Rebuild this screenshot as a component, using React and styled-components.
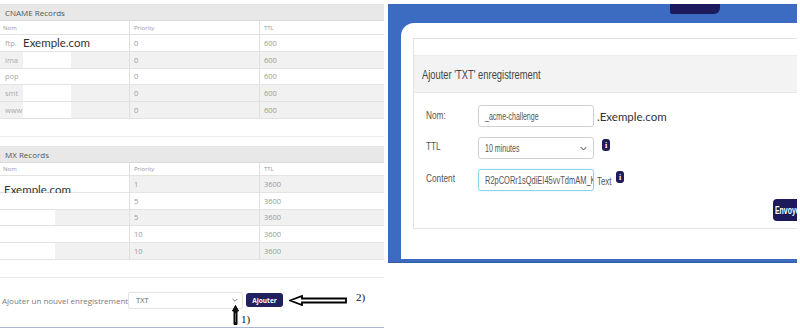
import React from 'react'
import styled, { createGlobalStyle } from 'styled-components'

const GlobalStyle = createGlobalStyle`
  html, body {
    margin: 0;
    padding: 0;
    background: #fff;
  }
  body {
    width: 800px;
    height: 328px;
    overflow: hidden;
    font-family: "Open Sans", "Liberation Sans", sans-serif;
  }
`

// the modal screenshot is horizontally squeezed; its texts are drawn narrow
const Squeeze = styled.span`
  display: inline-block;
  white-space: nowrap;
  font-family: "Liberation Sans", Arial, sans-serif;
  transform: scaleX(${p => p.$s || 0.68});
  transform-origin: left center;
  flex: ${p => (p.$grow ? '1' : 'none')};
  min-width: 0;
`

const Page = styled.div`
  display: flex;
  align-items: flex-start;
  height: 328px;
`

const LeftCol = styled.div`
  width: 384px;
  display: flex;
  flex-direction: column;
  padding-top: 4px;
`

const Table = styled.div`
  border-top: 1px solid #e4e4e4;
  display: flex;
  flex-direction: column;
  margin-top: ${p => p.$top || 0}px;
`

const TableTitle = styled.div`
  height: 16px;
  background: #e8e8e8;
  border-bottom: 1px solid #dadada;
  font-size: 8px;
  color: #555;
  line-height: 16px;
  padding-left: 5px;
  box-sizing: border-box;
`

const Row = styled.div`
  display: grid;
  grid-template-columns: 130px 130px 1fr;
  height: ${p => p.$h || 16.8}px;
  background: ${p => (p.$gray ? '#f1f1f1' : '#fff')};
  border-bottom: 1px solid #e3e3e3;
  box-sizing: border-box;
`

const Cell = styled.div`
  display: flex;
  align-items: center;
  padding-left: ${p => p.$pad ?? 4}px;
  font-size: ${p => (p.$head ? 6 : 7.5)}px;
  color: ${p => (p.$head ? '#999' : '#9a9a9a')};
  border-right: ${p => (p.$last ? 'none' : '1px solid #e0e0e0')};
  overflow: visible;
`

const Prefix = styled.span`
  width: 18px;
  overflow: hidden;
  white-space: nowrap;
  color: #aaa;
`

const Mask = styled.div`
  align-self: stretch;
  width: ${p => p.$w}px;
  background: #fff;
  display: flex;
  align-items: ${p => p.$align || 'center'};
  white-space: nowrap;
  box-sizing: border-box;
`

const Domain = styled.span`
  font-family: Lato, "Open Sans", sans-serif;
  font-size: 11.5px;
  color: #333;
  padding-left: ${p => p.$pl || 0}px;
  margin-bottom: ${p => p.$mb || 0}px;
`

const Divider = styled.div`
  background: ${p => p.$color || '#ececec'};
  margin-top: ${p => p.$mt}px;
  height: ${p => p.$h || 1}px;
`

const AddRow = styled.div`
  display: flex;
  align-items: center;
  height: 17px;
  margin-top: 14px;
  position: relative;
`

const AddLabel = styled.span`
  font-size: 8px;
  color: #7a7a7a;
  padding-left: 2px;
  width: 126px;
  white-space: nowrap;
`

const SmallSelect = styled.div`
  width: 115px;
  height: 17px;
  box-sizing: border-box;
  border: 1px solid #e2e2e2;
  border-radius: 2px;
  display: flex;
  align-items: center;
  justify-content: space-between;
  padding: 0 4px 0 7px;
  font-size: 7.5px;
  color: #666;
`

const Chevron = styled.svg`
  flex-shrink: 0;
`

const SmallButton = styled.button`
  margin-left: 3px;
  height: 14px;
  width: 37px;
  background: #23205f;
  border: none;
  border-radius: 3px;
  color: #fff;
  font-family: "Open Sans", sans-serif;
  font-weight: 700;
  font-size: 6.5px;
  padding: 0;
`

const Note = styled.span`
  font-family: "Liberation Serif", serif;
  font-size: 11px;
  color: #111;
  margin-left: ${p => p.$ml || 0}px;
  margin-top: ${p => p.$mt || 0}px;
`

const UpArrow = styled.div`
  position: absolute;
  left: 232px;
  top: 13px;
  display: flex;
  align-items: flex-end;
`

const Panel = styled.div`
  margin-left: 4px;
  margin-top: 4px;
  width: 409px;
  height: 259px;
  background: #3c6cc1;
  display: flex;
  flex-direction: column;
  padding: 0 0 3px 13px;
  box-sizing: border-box;
  border-bottom: 1px solid #35609f;
`

const TopBar = styled.div`
  height: 19px;
  display: flex;
  padding-left: 269px;
  flex-shrink: 0;
`

const Tab = styled.div`
  width: 50px;
  height: 10px;
  background: #1d1a5b;
  border-radius: 0 0 6px 2px;
`

const Inner = styled.div`
  flex: 1;
  background: #fff;
  border-top-left-radius: 13px;
  overflow: hidden;
  padding: 15px 0 0 12px;
`

const Card = styled.div`
  width: 429px;
  border: 1px solid #e3e3e3;
  box-sizing: border-box;
  padding-top: 16px;
`

const CardHeader = styled.div`
  height: 38px;
  background: #f3f3f3;
  border-top: 1px solid #ececec;
  border-bottom: 1px solid #e6e6e6;
  box-sizing: border-box;
  display: flex;
  align-items: center;
  padding-left: 8px;
  font-size: 13px;
  color: #444;
`

const Form = styled.div`
  display: flex;
  flex-direction: column;
  gap: 10px;
  padding: 12px 0 0 12px;
`

const FormRow = styled.div`
  display: flex;
  align-items: center;
`

const Label = styled.span`
  width: 52px;
  flex-shrink: 0;
  align-self: flex-start;
  padding-top: ${p => p.$pt || 3}px;
  font-size: 11.5px;
  color: #555;
`

const Field = styled.div`
  width: 116px;
  height: 22px;
  flex-shrink: 0;
  box-sizing: border-box;
  border: 1px solid ${p => (p.$focus ? '#8fd3e8' : '#cfcfcf')};
  box-shadow: ${p => (p.$focus ? '0 0 2px #b5e6f3' : 'none')};
  border-radius: 3px;
  display: flex;
  align-items: center;
  padding: 0 6px;
  overflow: hidden;
  font-size: 11px;
  color: #555;
`

const Suffix = styled.span`
  margin-left: 3px;
  font-family: Lato, "Open Sans", sans-serif;
  font-size: 11.5px;
  color: #333;
`

const Hint = styled.span`
  width: 19px;
  flex-shrink: 0;
  margin-left: 3px;
  font-size: 11px;
  color: #555;
`

const Info = styled.span`
  margin-left: ${p => p.$ml ?? 8}px;
  width: 8px;
  height: 12px;
  border-radius: 3px;
  background: #1f1c5a;
  color: #fff;
  font-family: "Liberation Serif", serif;
  font-weight: 700;
  font-size: 8px;
  display: flex;
  align-items: center;
  justify-content: center;
  align-self: flex-start;
  margin-top: 2px;
`

const ButtonRow = styled.div`
  display: flex;
  justify-content: flex-end;
  padding: 8px 12px 7px 0;
`

const Envoyer = styled.button`
  width: 56px;
  height: 22px;
  background: #1d1a5b;
  border: none;
  border-radius: 4px;
  color: #fff;
  font-weight: 700;
  font-size: 10.5px;
  text-align: left;
  padding: 0 0 0 2px;
`

const cname = ['ftp.', 'ima', 'pop', 'smt', 'www']
const mx = ['1', '5', '5', '10', '10']

function ChevronDown({ size = 6 }) {
  return (
    <Chevron width={size} height={size * 0.7} viewBox="0 0 10 7">
      <path d="M1 1.5 L5 5.5 L9 1.5" fill="none" stroke="#777" strokeWidth="1.6" />
    </Chevron>
  )
}

function ArrowLeft() {
  return (
    <svg width="58" height="11" viewBox="0 0 58 11">
      <path
        d="M1 5.5 L13 1 L13 3.5 L57 3.5 L57 7.5 L13 7.5 L13 10 Z"
        fill="#fff"
        stroke="#000"
        strokeWidth="1.8"
      />
    </svg>
  )
}

function ArrowUp() {
  return (
    <svg width="7" height="20" viewBox="0 0 7 20">
      <path d="M3.5 0.5 L6.5 6 L5 6 L5 19.5 L2 19.5 L2 6 L0.5 6 Z" fill="#111" stroke="#000" strokeWidth="1" />
      <rect x="3" y="8" width="1" height="9" fill="#666" />
    </svg>
  )
}

export default function App() {
  return (
    <Page>
      <GlobalStyle />
      <LeftCol>
        <Table>
          <TableTitle>CNAME Records</TableTitle>
          <Row $h={14}>
            <Cell $head $pad={3}>Nom</Cell>
            <Cell $head>Priority</Cell>
            <Cell $head $last>TTL</Cell>
          </Row>
          {cname.map((n, i) => (
            <Row key={n} $gray={i % 2 === 1 || i === 4}>
              <Cell $pad={5}>
                <Prefix>{n}</Prefix>
                <Mask $w={48}>{i === 0 && <Domain>Exemple.com</Domain>}</Mask>
              </Cell>
              <Cell>0</Cell>
              <Cell $last>600</Cell>
            </Row>
          ))}
        </Table>

        <Divider $mt={17} />

        <Table $top={9}>
          <TableTitle>MX Records</TableTitle>
          <Row $h={13}>
            <Cell $head $pad={3}>Nom</Cell>
            <Cell $head>Priority</Cell>
            <Cell $head $last>TTL</Cell>
          </Row>
          {mx.map((p, i) => (
            <Row key={i} $gray={i % 2 === 0}>
              <Cell $pad={0}>
                <Mask $w={i < 2 ? 129 : 55} $align={i === 0 ? 'flex-end' : 'center'}>
                  {i === 0 && (
                    <Domain $pl={4} $mb={-4}>
                      Exemple.com
                    </Domain>
                  )}
                </Mask>
              </Cell>
              <Cell>{p}</Cell>
              <Cell $last>3600</Cell>
            </Row>
          ))}
        </Table>

        <Divider $mt={17} $color="#e8e8e8" />

        <AddRow>
          <AddLabel>Ajouter un nouvel enregistrement</AddLabel>
          <SmallSelect>
            TXT
            <ChevronDown size={6} />
          </SmallSelect>
          <SmallButton>Ajouter</SmallButton>
          <span style={{ marginLeft: 6, display: 'flex' }}>
            <ArrowLeft />
          </span>
          <Note $ml={9} $mt={-6}>2)</Note>
          <UpArrow>
            <ArrowUp />
            <Note $ml={2}>1)</Note>
          </UpArrow>
        </AddRow>

        <Divider $mt={18} $h={2} $color="#aab7cd" />
      </LeftCol>

      <Panel>
        <TopBar>
          <Tab />
        </TopBar>
        <Inner>
          <Card>
            <CardHeader>
              <Squeeze $s={0.72}>Ajouter 'TXT' enregistrement</Squeeze>
            </CardHeader>
            <Form>
              <FormRow>
                <Label $pt={2}>
                  <Squeeze $s={0.72}>Nom:</Squeeze>
                </Label>
                <Field>
                  <Squeeze $s={0.64}>_acme-challenge</Squeeze>
                </Field>
                <Suffix>.Exemple.com</Suffix>
              </FormRow>
              <FormRow>
                <Label $pt={1}>
                  <Squeeze $s={0.72}>TTL</Squeeze>
                </Label>
                <Field>
                  <Squeeze $s={0.64} $grow>10 minutes</Squeeze>
                  <ChevronDown size={7} />
                </Field>
                <Info>i</Info>
              </FormRow>
              <FormRow>
                <Label $pt={1}>
                  <Squeeze $s={0.72}>Content</Squeeze>
                </Label>
                <Field $focus>
                  <Squeeze $s={0.68}>R2pCORr1sQdiEI45vvTdmAM_K0</Squeeze>
                </Field>
                <Hint>
                  <Squeeze $s={0.72}>Text</Squeeze>
                </Hint>
                <Info $ml={0}>i</Info>
              </FormRow>
            </Form>
            <ButtonRow>
              <Envoyer>
                <Squeeze $s={0.66}>Envoyer</Squeeze>
              </Envoyer>
            </ButtonRow>
          </Card>
        </Inner>
      </Panel>
    </Page>
  )
}
